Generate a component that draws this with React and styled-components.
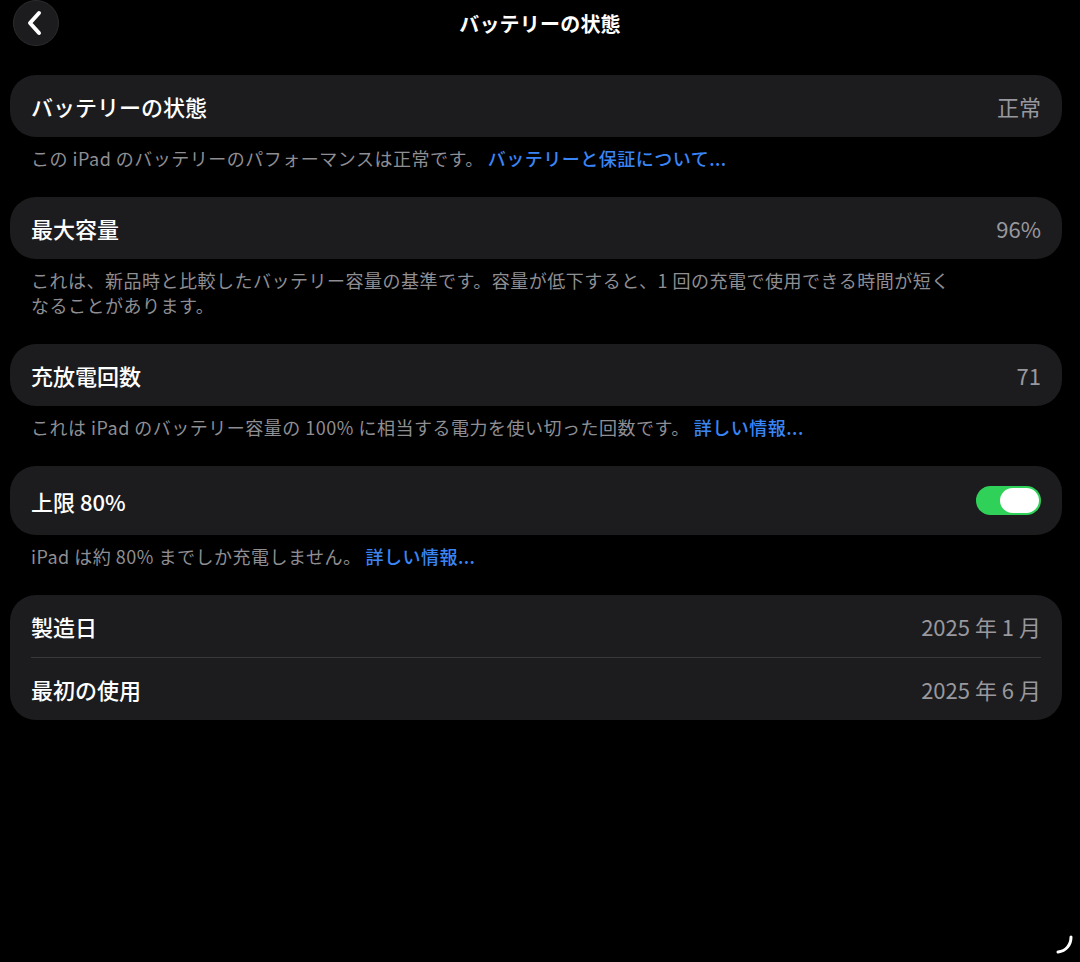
import React from "react"
import styled, { createGlobalStyle } from "styled-components"

const GlobalStyle = createGlobalStyle`
    * { box-sizing: border-box; }
    body {
        margin: 0;
        background: #000;
        font-family: "Noto Sans CJK JP", "Noto Sans", sans-serif;
        -webkit-font-smoothing: antialiased;
    }
`

const Screen = styled.div`
    position: relative;
    min-height: 962px;
    background: #000;
    color: #fff;
`

const Header = styled.header`
    display: grid;
    grid-template-columns: 1fr auto 1fr;
    align-items: center;
    height: 46px;
    padding: 0 13px;
`

const BackButton = styled.button`
    width: 46px;
    height: 46px;
    margin-top: -1px;
    border-radius: 50%;
    border: 1px solid #2c2c2e;
    background: #1c1c1e;
    display: flex;
    align-items: center;
    justify-content: center;
    padding: 0 3px 0 0;
    cursor: pointer;
`

const Title = styled.h1`
    margin: 0;
    font-size: 20px;
    font-weight: 700;
    letter-spacing: 0.2px;
`

const Content = styled.main`
    display: flex;
    flex-direction: column;
    padding: 29px 18px 0 10px;
`

const Group = styled.section`
    background: #1c1c1e;
    border-radius: 26px;
    display: flex;
    flex-direction: column;
`

const Row = styled.div`
    display: flex;
    align-items: center;
    justify-content: space-between;
    height: ${(p) => (p.$tall ? "69px" : "62px")};
    padding: 0 21px;
`

const Label = styled.span`
    font-size: 22px;
    font-weight: 500;
    color: #fff;
`

const Value = styled.span`
    font-size: 22px;
    font-weight: 400;
    color: #98989e;
`

const Separator = styled.div`
    height: 1px;
    margin: 0 21px;
    background: #38383a;
`

const Footer = styled.p`
    margin: 0;
    padding: 9px 21px 26px;
    font-size: 18px;
    line-height: 25px;
    letter-spacing: 0.5px;
    color: #8e8e93;
`

const Link = styled.a`
    color: #3a85f6;
    font-weight: 500;
    text-decoration: none;
    margin-left: 4px;
`

const Track = styled.div`
    width: 65px;
    height: 29px;
    border-radius: 15px;
    background: ${(p) => (p.$on ? "#30d158" : "#39393d")};
    display: flex;
    align-items: center;
    justify-content: ${(p) => (p.$on ? "flex-end" : "flex-start")};
    padding: 0 2px;
`

const Knob = styled.div`
    width: 39px;
    height: 25px;
    border-radius: 13px;
    background: #fff;
`

const Corner = styled.svg`
    position: absolute;
    right: 4px;
    bottom: 6px;
`

const Toggle = ({ on }) => (
    <Track $on={on}>
        <Knob />
    </Track>
)

const App = () => {
    return (
        <Screen>
            <GlobalStyle />
            <Header>
                <div>
                    <BackButton aria-label="戻る">
                        <svg width="16" height="26" viewBox="0 0 16 26">
                            <path d="M12 3 L3 13 L12 23" fill="none" stroke="#fff" strokeWidth="4" strokeLinecap="round" strokeLinejoin="round" />
                        </svg>
                    </BackButton>
                </div>
                <Title>バッテリーの状態</Title>
                <div />
            </Header>

            <Content>
                <Group>
                    <Row>
                        <Label>バッテリーの状態</Label>
                        <Value>正常</Value>
                    </Row>
                </Group>
                <Footer>
                    この iPad のバッテリーのパフォーマンスは正常です。<Link href="#">バッテリーと保証について...</Link>
                </Footer>

                <Group>
                    <Row>
                        <Label>最大容量</Label>
                        <Value>96%</Value>
                    </Row>
                </Group>
                <Footer>
                    これは、新品時と比較したバッテリー容量の基準です。容量が低下すると、1 回の充電で使用できる時間が短く<br />
                    なることがあります。
                </Footer>

                <Group>
                    <Row>
                        <Label>充放電回数</Label>
                        <Value>71</Value>
                    </Row>
                </Group>
                <Footer>
                    これは iPad のバッテリー容量の 100% に相当する電力を使い切った回数です。<Link href="#">詳しい情報...</Link>
                </Footer>

                <Group>
                    <Row $tall>
                        <Label>上限 80%</Label>
                        <Toggle on />
                    </Row>
                </Group>
                <Footer>
                    iPad は約 80% までしか充電しません。<Link href="#">詳しい情報...</Link>
                </Footer>

                <Group>
                    <Row>
                        <Label>製造日</Label>
                        <Value>2025 年 1 月</Value>
                    </Row>
                    <Separator />
                    <Row>
                        <Label>最初の使用</Label>
                        <Value>2025 年 6 月</Value>
                    </Row>
                </Group>
            </Content>

            <Corner width="22" height="22" viewBox="0 0 22 22">
                <path d="M17 3 C17 11 12 17 4 18" fill="none" stroke="#fff" strokeWidth="3" strokeLinecap="round" />
            </Corner>
        </Screen>
    )
}

export default App
